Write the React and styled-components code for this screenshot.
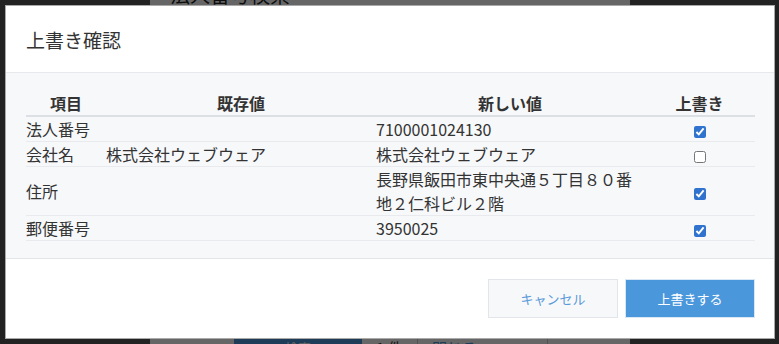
import React from 'react';
import styled, { createGlobalStyle } from 'styled-components';

const GlobalStyle = createGlobalStyle`
  html, body {
    margin: 0;
    padding: 0;
    width: 779px;
    height: 344px;
    overflow: hidden;
    font-family: "Noto Sans CJK JP", "Noto Sans", sans-serif;
  }
`;

const Page = styled.div`
  width: 779px;
  height: 344px;
  background: #555;
  overflow: hidden;
  display: flex;
  justify-content: flex-start;
`;

const Panel = styled.div`
  margin-left: 150px;
  width: 480px;
  height: 100%;
  background: #fff;
  display: flex;
  flex-direction: column;
`;

const PageTitle = styled.h1`
  margin: -17px 0 0 20px;
  font-size: 20px;
  font-weight: normal;
  line-height: 24px;
  color: #222;
`;

const ResultBar = styled.div`
  margin-top: auto;
  margin-bottom: -20px;
  height: 26px;
  display: flex;
  align-items: stretch;
  padding-left: 84px;
`;

const SearchButton = styled.div`
  width: 128px;
  background: #4b97dc;
  color: #fff;
  font-size: 13px;
  text-align: center;
  line-height: 20px;
`;

const ResultCell = styled.div`
  width: ${({ $w }) => $w}px;
  border-right: 1px solid #ccc;
  color: ${({ $link }) => ($link ? '#4b97dc' : '#333')};
  font-size: 15px;
  line-height: 20px;
  padding-left: 14px;
  box-sizing: border-box;
`;

const Overlay = styled.div`
  position: fixed;
  inset: 0;
  background: rgba(0, 0, 0, 0.6);
  display: flex;
  align-items: flex-start;
`;

const Modal = styled.div`
  margin: 5px 0 0 5px;
  width: 770px;
  height: 334px;
  box-sizing: border-box;
  border: 1px solid #a9a9a9;
  background: #fff;
  display: flex;
  flex-direction: column;
`;

const Header = styled.div`
  height: 66px;
  display: flex;
  align-items: center;
  padding: 0 20px;
  border-bottom: 1px solid #e6e8eb;
`;

const Title = styled.h2`
  margin: 0 0 0 0;
  font-size: 19px;
  font-weight: normal;
  color: #333;
`;

const Body = styled.div`
  background: #f7f8fa;
  padding: 16px 17px 18px 20px;
  border-bottom: 1px solid #e3e6e9;
  height: 186px;
  box-sizing: border-box;
`;

const Table = styled.table`
  width: 729px;
  border-collapse: collapse;
  table-layout: fixed;
  font-size: 16px;
  color: #333;
`;

const Th = styled.th`
  font-weight: bold;
  text-align: center;
  line-height: 24px;
  padding: 2px 0 0;
  border-bottom: 2px solid #dcdfe3;
  color: #333;
`;

const Td = styled.td`
  line-height: 24px;
  padding: 0;
  vertical-align: middle;
  border-bottom: 1px solid #e8eaed;
  text-align: ${({ $center }) => ($center ? 'center' : 'left')};
`;

const Check = styled.input`
  width: 12px;
  height: 12px;
  margin: 0;
  vertical-align: middle;
  accent-color: #2f73cf;
`;

const Footer = styled.div`
  flex: 1;
  display: flex;
  justify-content: flex-end;
  align-items: flex-start;
  gap: 7px;
  padding: 20px 19px 0 0;
`;

const Button = styled.button`
  width: 130px;
  height: 39px;
  font-family: inherit;
  font-size: 13px;
  border: 1px solid ${({ $primary }) => ($primary ? '#d9e6f3' : '#e2e5e9')};
  background: ${({ $primary }) => ($primary ? '#4b97dc' : '#f7f8fa')};
  color: ${({ $primary }) => ($primary ? '#fff' : '#5a9ad8')};
  cursor: pointer;
`;

const rows = [
  { label: '法人番号', old: '', next: '7100001024130', checked: true },
  { label: '会社名', old: '株式会社ウェブウェア', next: '株式会社ウェブウェア', checked: false },
  { label: '住所', old: '', next: '長野県飯田市東中央通５丁目８０番地２仁科ビル２階', checked: true },
  { label: '郵便番号', old: '', next: '3950025', checked: true },
];

export default function App() {
  return (
    <>
      <GlobalStyle />
      <Page>
        <Panel>
          <PageTitle>法人番号検索</PageTitle>
          <ResultBar>
            <SearchButton>検索</SearchButton>
            <ResultCell $w={56}>1 件</ResultCell>
            <ResultCell $w={130} $link>閉じる</ResultCell>
          </ResultBar>
        </Panel>
      </Page>
      <Overlay>
        <Modal>
          <Header>
            <Title>上書き確認</Title>
          </Header>
          <Body>
            <Table>
              <colgroup>
                <col style={{ width: 80 }} />
                <col style={{ width: 270 }} />
                <col style={{ width: 268 }} />
                <col style={{ width: 111 }} />
              </colgroup>
              <thead>
                <tr>
                  <Th>項目</Th>
                  <Th>既存値</Th>
                  <Th>新しい値</Th>
                  <Th>上書き</Th>
                </tr>
              </thead>
              <tbody>
                {rows.map((r) => (
                  <tr key={r.label}>
                    <Td>{r.label}</Td>
                    <Td>{r.old}</Td>
                    <Td>{r.next}</Td>
                    <Td $center>
                      <Check type="checkbox" defaultChecked={r.checked} />
                    </Td>
                  </tr>
                ))}
              </tbody>
            </Table>
          </Body>
          <Footer>
            <Button>キャンセル</Button>
            <Button $primary>上書きする</Button>
          </Footer>
        </Modal>
      </Overlay>
    </>
  );
}
